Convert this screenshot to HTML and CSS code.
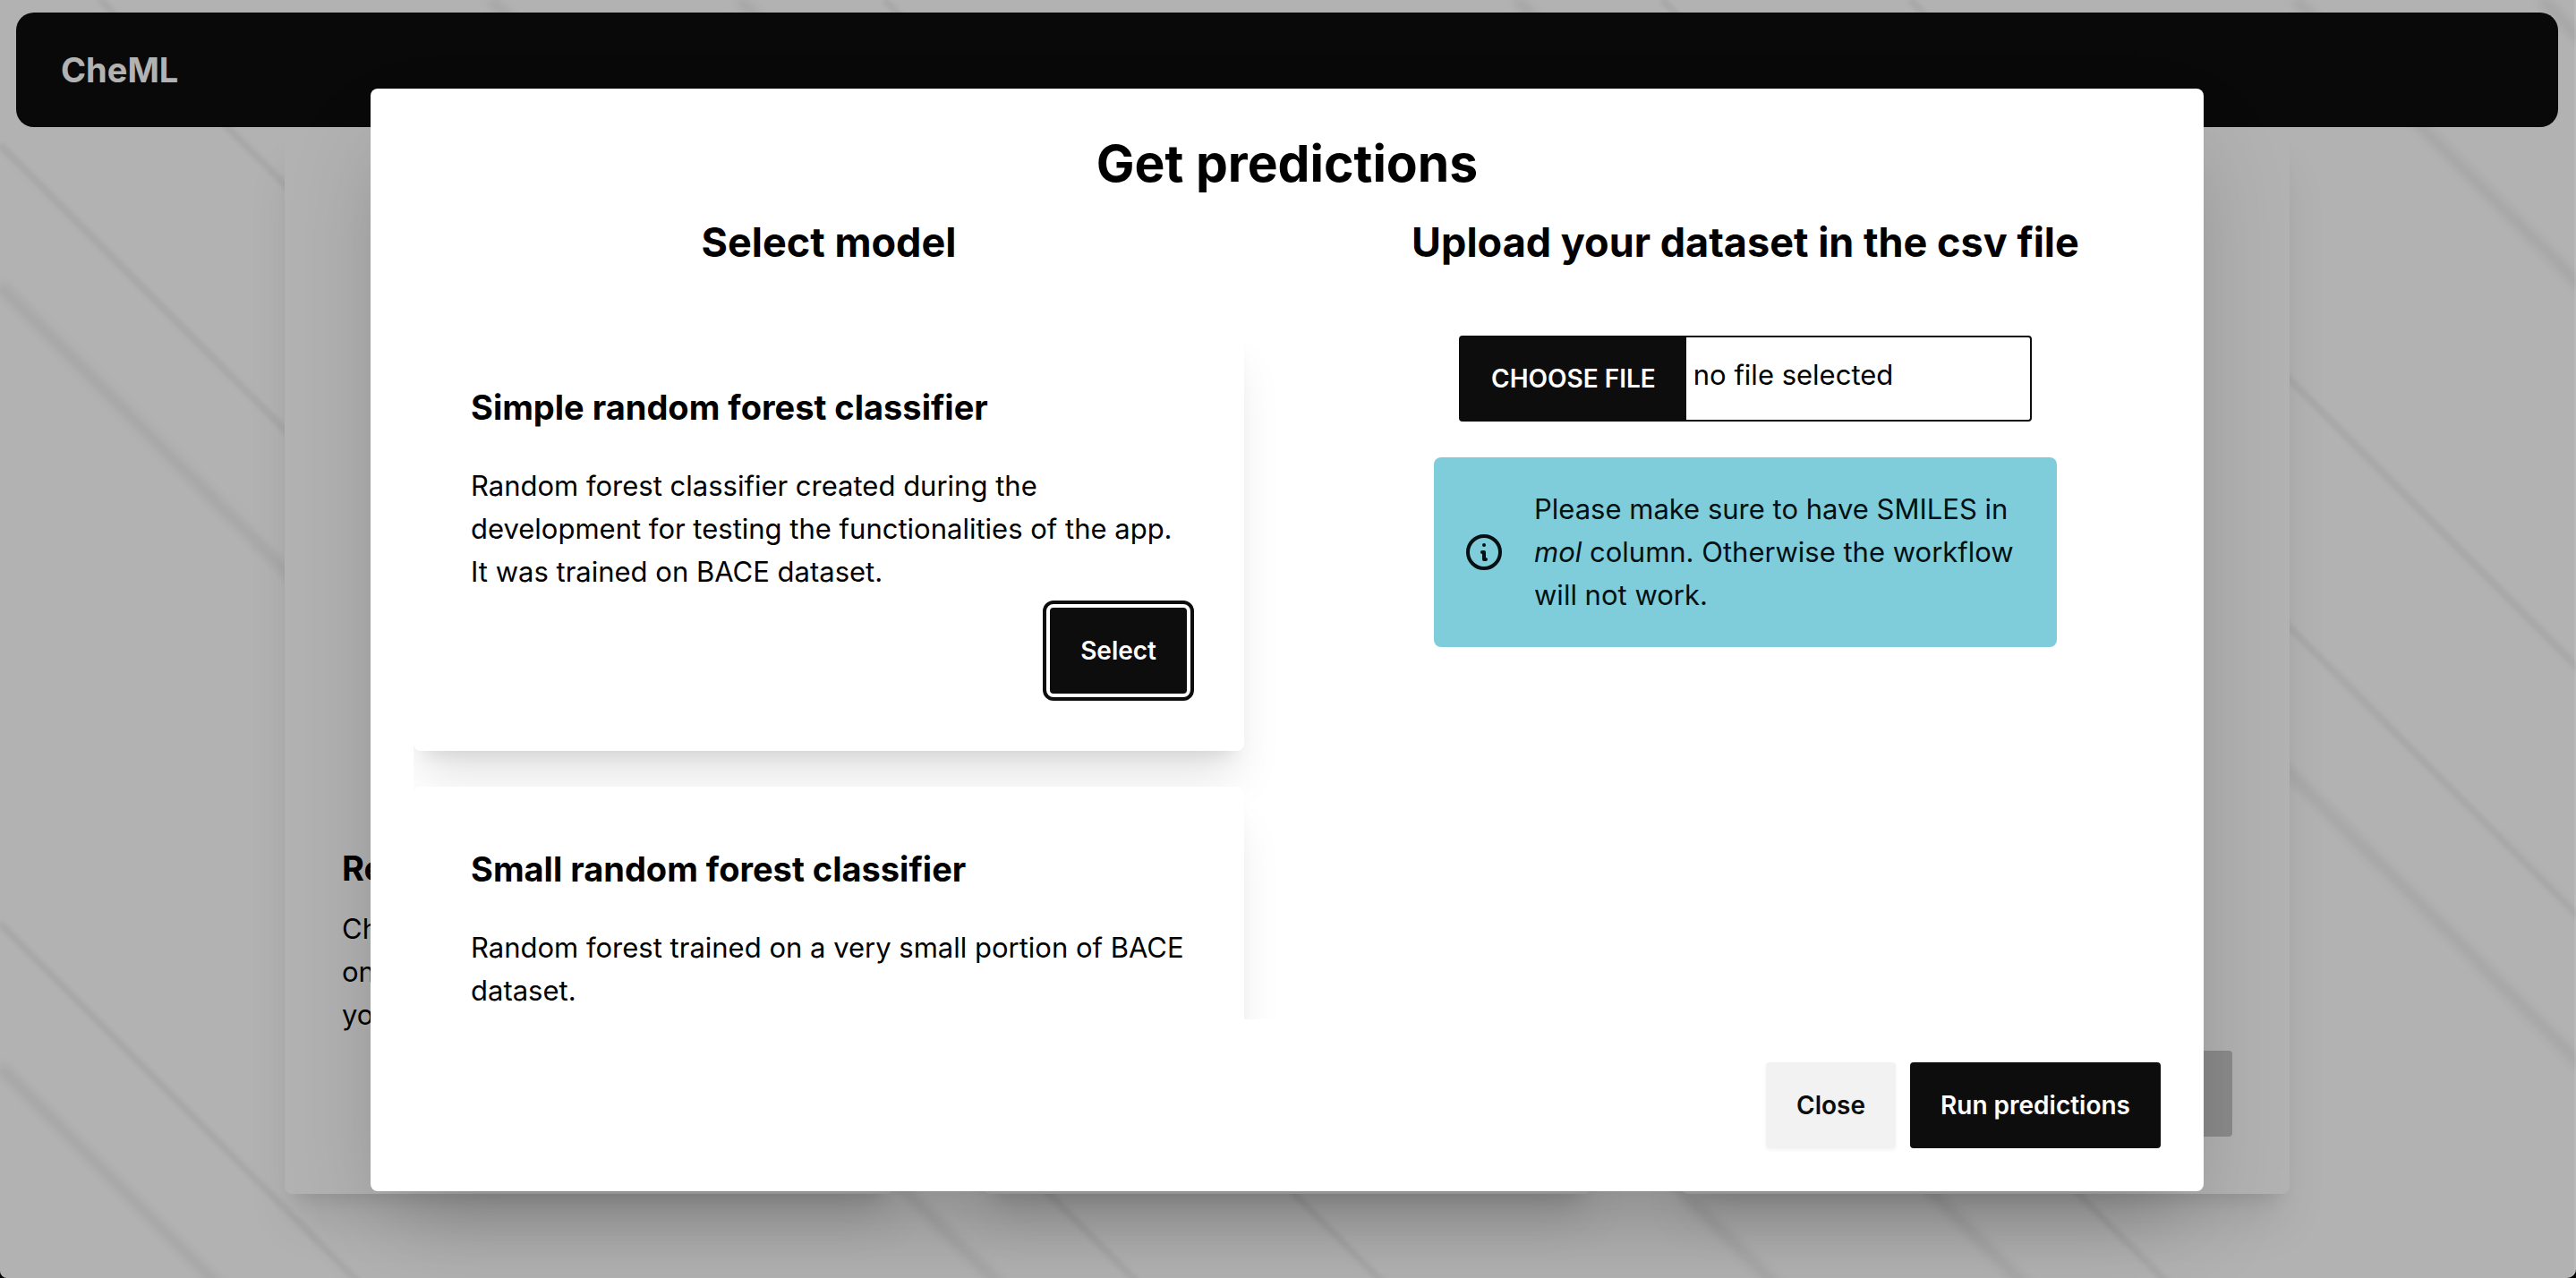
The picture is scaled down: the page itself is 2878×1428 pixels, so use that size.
FILE: index.html
```html
<!DOCTYPE html>
<html lang="en">
<head>
<meta charset="utf-8">
<title>CheML</title>
<link rel="stylesheet" href="styles.css">
</head>
<body>
<div class="app">
  <svg class="stripes" aria-hidden="true">
    <g class="stripes-thick">
      <path d="M0 1192l2000 2000M0 319l2000 2000M548 0l2000 2000M826 0l2000 2000M1694 0l2000 2000M2564 0l2000 2000M2840 0l2000 2000"/>
    </g>
    <g class="stripes-thin">
      <path d="M0 1032l2000 2000M0 162l2000 2000M112 0l2000 2000M988 0l2000 2000M1857 0l2000 2000M2134 0l2000 2000"/>
    </g>
  </svg>
  <header class="navbar"><a class="brand" href="#">CheML</a></header>
  <main class="page">
    <section class="panel">
      <h2 class="panel-title">Ready</h2>
      <p class="panel-text">Check<br>on<br>your</p>
    </section>
    <section class="panel"></section>
    <section class="panel">
      <button class="btn btn-muted" type="button" aria-label="Open"></button>
    </section>
  </main>
</div>
<div class="overlay">
  <div class="modal" role="dialog" aria-modal="true" aria-labelledby="modal-title">
    <h1 class="modal-title" id="modal-title">Get predictions</h1>
    <div class="columns">
      <section class="column">
        <h2 class="column-title">Select model</h2>
        <div class="models">
          <article class="card">
            <h3 class="card-title">Simple random forest classifier</h3>
            <p>Random forest classifier created during the development for testing the functionalities of the app. It was trained on BACE dataset.</p>
            <div class="card-actions"><button class="btn btn-dark btn-focused" type="button">Select</button></div>
          </article>
          <article class="card">
            <h3 class="card-title">Small random forest classifier</h3>
            <p>Random forest trained on a very small portion of BACE dataset.</p>
          </article>
        </div>
      </section>
      <section class="column">
        <h2 class="column-title">Upload your dataset in the csv file</h2>
        <div class="upload">
          <label class="file">
            <input class="file-input" type="file" accept=".csv">
            <span class="file-button">CHOOSE FILE</span>
            <span class="file-name">no file selected</span>
          </label>
          <div class="alert">
            <svg class="alert-icon" viewBox="0 0 24 24" aria-hidden="true"><path d="M13 16h-1v-4h-1m1-4h.01M21 12a9 9 0 11-18 0 9 9 0 0118 0z"/></svg>
            <p>Please make sure to have SMILES in <em>mol</em> column. Otherwise the workflow will not work.</p>
          </div>
        </div>
      </section>
    </div>
    <div class="modal-actions">
      <button class="btn btn-light" type="button">Close</button>
      <button class="btn btn-dark" type="button">Run predictions</button>
    </div>
  </div>
</div>
</body>
</html>
```
FILE: styles.css
```css
* { box-sizing: border-box; margin: 0; }
html { background: #000; }
body {
  font-family: Inter, "Liberation Sans", sans-serif;
  font-size: 31px;
  line-height: 48px;
  color: #000;
  height: 100vh;
  overflow: hidden;
}
button { font: inherit; border: 0; }
.app {
  position: relative;
  height: 100vh;
  padding: 14px 20px 0 18px;
  background: #fff;
  border-radius: 0 0 10px 8px;
  overflow: hidden;
}
.stripes {
  position: absolute;
  inset: 0;
  width: 100%;
  height: 100%;
  fill: none;
  stroke: #f1f1f1;
}
.stripes-thick { stroke-width: 14px; filter: blur(4px); }
.stripes-thin { stroke-width: 8px; filter: blur(2px); }
.navbar {
  position: relative;
  display: flex;
  align-items: center;
  height: 128px;
  padding: 0 50px;
  border-radius: 20px;
  background: #0d0d0d;
}
.brand { color: #fff; font-size: 38px; font-weight: 700; text-decoration: none; }
.page {
  position: relative;
  display: grid;
  grid-template-columns: repeat(3, 1fr);
  gap: 100px;
  padding: 0 300px;
}
.panel {
  display: flex;
  flex-direction: column;
  justify-content: flex-end;
  height: 1192px;
  padding: 64px;
  background: #fff;
  border-radius: 8px;
  box-shadow: 0 40px 50px -10px rgba(0, 0, 0, .1), 0 16px 20px -12px rgba(0, 0, 0, .1);
}
.panel-title { margin-bottom: 16px; font-size: 38px; line-height: 56px; font-weight: 700; }
.panel-text { padding-bottom: 112px; }
.overlay {
  position: absolute;
  inset: 0;
  display: flex;
  align-items: center;
  justify-content: center;
  padding-top: 2px;
  background: rgba(0, 0, 0, .3);
  border-right: 2px solid rgba(255, 255, 255, .1);
  border-radius: 0 0 10px 8px;
}
.modal {
  width: 2048px;
  max-width: 94%;
  padding: 48px;
  background: #fff;
  border-radius: 8px;
  box-shadow: 0 50px 100px -24px rgba(0, 0, 0, .25);
}
.modal-title { font-size: 57px; line-height: 72px; font-weight: 700; text-align: center; }
.columns { display: grid; grid-template-columns: 1fr 1fr; gap: 96px; }
.column { padding-top: 12px; min-width: 0; }
.column-title { font-size: 45px; line-height: 80px; font-weight: 700; text-align: center; }
.models {
  height: 828px;
  margin-right: -48px;
  padding: 52px 48px 0 0;
  overflow: hidden;
}
.card {
  margin-bottom: 40px;
  padding: 64px;
  background: #fff;
  border-radius: 8px;
  box-shadow: 0 40px 50px -10px rgba(0, 0, 0, .1), 0 16px 20px -12px rgba(0, 0, 0, .1);
}
.card-title { margin-bottom: 36px; font-size: 38px; line-height: 56px; font-weight: 700; }
.card-actions { display: flex; justify-content: flex-end; padding-top: 16px; }
.btn {
  height: 96px;
  padding: 0 34px;
  border-radius: 4px;
  font-size: 28px;
  font-weight: 600;
}
.btn-dark { background: #0d0d0d; color: #fff; }
.btn-light { background: #f2f2f2; color: #0d0d0d; box-shadow: 0 2px 4px rgba(0, 0, 0, .05); }
.btn-muted { align-self: flex-end; width: 160px; background: #c8c8c8; }
.btn-focused { outline: 4px solid #0d0d0d; outline-offset: 4px; }
.upload {
  display: flex;
  flex-direction: column;
  align-items: center;
  gap: 40px;
  padding-top: 64px;
}
.file {
  position: relative;
  display: flex;
  width: 640px;
  height: 96px;
  border: 2px solid #0d0d0d;
  border-radius: 4px;
}
.file-input { position: absolute; inset: 0; width: 100%; height: 100%; opacity: 0; }
.file-button {
  display: flex;
  align-items: center;
  padding: 0 34px;
  background: #0d0d0d;
  color: #fff;
  font-size: 28px;
  font-weight: 600;
}
.file-name { padding: 18px 8px; }
.alert {
  display: flex;
  align-items: center;
  gap: 32px;
  width: 696px;
  padding: 34px 32px;
  background: #7fcdda;
  border-radius: 8px;
  color: #051013;
}
.alert-icon {
  flex: none;
  width: 48px;
  height: 48px;
  fill: none;
  stroke: currentColor;
  stroke-width: 2;
  stroke-linecap: round;
  stroke-linejoin: round;
}
.modal-actions { display: flex; justify-content: flex-end; gap: 16px; padding-top: 48px; }
```
